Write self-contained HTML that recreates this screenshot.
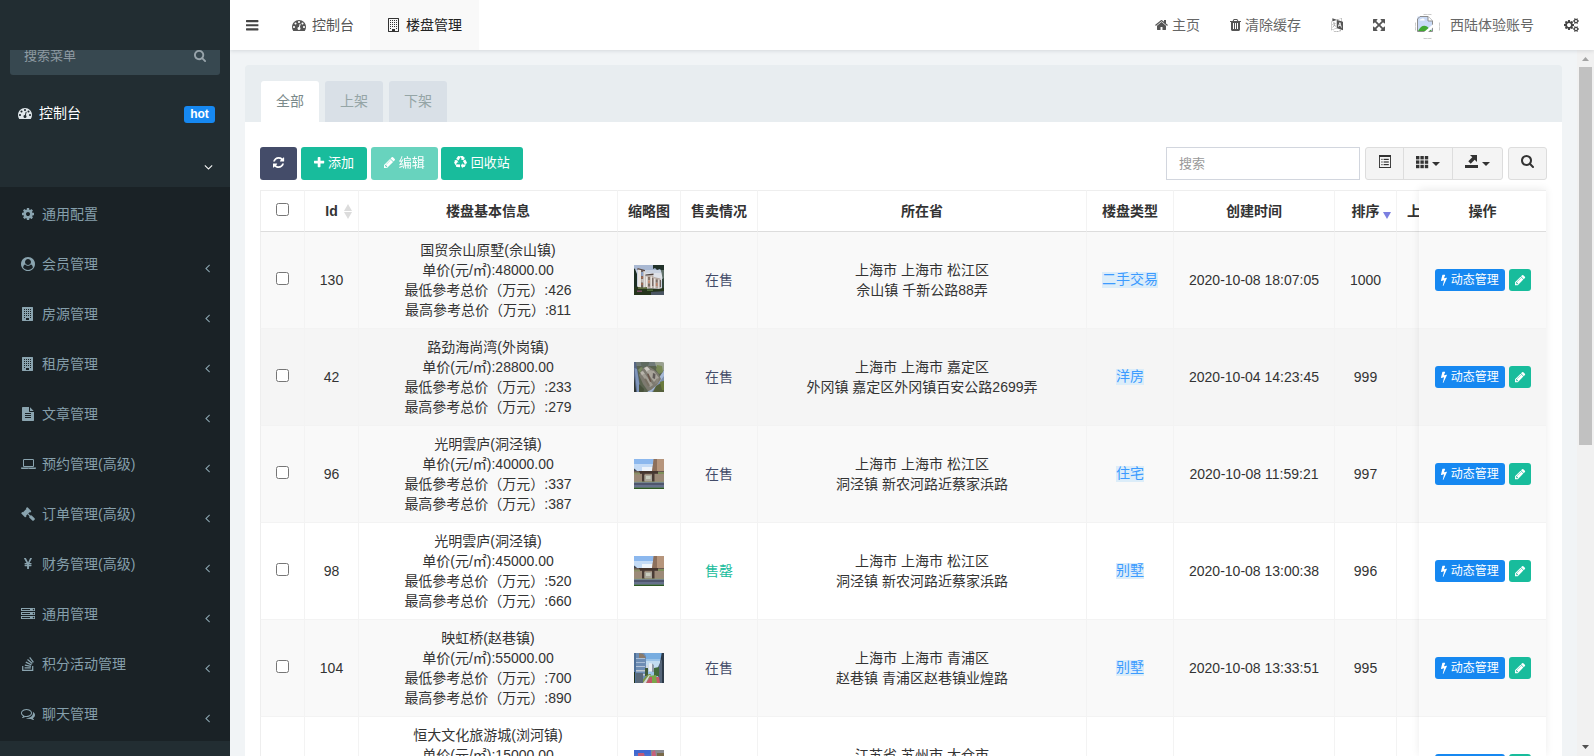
<!DOCTYPE html>
<html lang="zh-CN"><head><meta charset="utf-8"><title>楼盘管理</title><style>
*{box-sizing:border-box}
html,body{margin:0;padding:0}
body{width:1594px;height:756px;overflow:hidden;position:relative;background:#f1f4f6;font-family:"Liberation Sans","Noto Sans CJK SC",sans-serif;font-size:14px;line-height:20px;color:#333}
svg.fa{display:inline-block;vertical-align:-2px;overflow:visible}
.abs{position:absolute}
/* sidebar */
#side{position:absolute;left:0;top:0;width:230px;height:756px;background:#222d32;overflow:hidden;z-index:6}
#sform{position:absolute;left:10px;top:40px;width:210px;height:35px;background:#374850;border-radius:3px}
#sform span.ph{position:absolute;left:14px;top:6px;font-size:13px;line-height:20px;color:#8e9aa2}
#sidetop{position:absolute;left:0;top:0;width:230px;height:50px;background:#222d32}
.m1{position:absolute;left:0;width:230px;height:44px;color:#fff}
.sub{position:absolute;left:0;top:187px;width:230px;height:554px;background:#1a2226}
.sub .it{position:absolute;left:0;width:230px;height:50px;color:#859fab}
.sub .it .ic{position:absolute;left:19px;top:15px;width:18px;height:20px;text-align:center}
.sub .it .tx{position:absolute;left:42px;top:15px;line-height:20px;white-space:nowrap}
.sub .it .ar{position:absolute;left:205px;top:19px;line-height:20px}
/* header */
#hdr{position:absolute;left:230px;top:0;width:1364px;height:50px;background:#fff;box-shadow:0 1px 4px rgba(0,21,41,.12);z-index:5}
#hdr .t{position:absolute;top:0;height:50px;line-height:50px;white-space:nowrap;color:#666}
/* content */
#panel{position:absolute;left:245px;top:65px;width:1317px;height:800px;background:#fff;border-radius:3px}
#phead{position:absolute;left:0;top:0;width:1317px;height:57px;background:#e8edf0;border-radius:3px 3px 0 0}
.ptab{position:absolute;top:16px;height:41px;width:58px;text-align:center;line-height:40px;border-radius:3px 3px 0 0;background:#d9e0e7;color:#95a5a6}
.ptab.on{background:#fff;color:#7b8a8b}
.btn{position:absolute;top:147px;height:33px;border-radius:3px;color:#fff;font-size:13px;line-height:29px;text-align:center;white-space:nowrap;border:1px solid transparent}
.btn svg.fa{vertical-align:-2px}
table{border-collapse:separate;border-spacing:0}
#tw{position:absolute;left:260px;top:190px;width:1286px;height:566px;overflow:hidden}
#tbl{table-layout:fixed;width:1339px}
#tbl th,#tbl td{border-left:1px solid #f3f3f3;border-top:1px solid #f3f3f3;text-align:center;vertical-align:middle;padding:8px;overflow:hidden;white-space:nowrap}
#tbl th{height:42px;padding:0 8px 0;border-bottom:1px solid #ddd;font-weight:bold;color:#333;background:#fff;position:relative}
#tbl td{height:97px;line-height:20px;color:#333}
#tbl tbody tr:first-child td{border-top:0;height:96px}
#tbl th:first-child,#tbl td:first-child{border-left-color:#eee}
#tbl th{border-top-color:#eee}
#tbl tr.s td{background:#f9f9f9}
#tbl tr.h td{background:#f5f5f5}
.cb{display:inline-block;width:13px;height:13px;border:1px solid #767676;border-radius:2.5px;background:#fff;vertical-align:middle;position:relative;top:-3px;left:0px}
#tbl th .cb{top:-3px}
.thumb{display:inline-block;width:30px;height:30px;vertical-align:middle;overflow:hidden}
.lab{display:inline-block;height:16px;line-height:15px;background:#dcedf9;color:#3c9bff;vertical-align:middle;position:relative;top:-1px}
#fix{position:absolute;left:1419px;top:190px;width:127px;height:566px;box-shadow:0 -1px 8px rgba(0,0,0,.08);background:#fff;overflow:hidden}
#fix .h{height:42px;border-top:1px solid #eee;border-bottom:1px solid #ddd;line-height:41px;text-align:center;font-weight:bold;background:#fff}
#fix .r{height:97px;position:relative;border-top:1px solid #f3f3f3;background:#fff}
#fix .r.s{background:#f9f9f9}
#fix .r.hv{background:#f5f5f5}
.xs{position:absolute;top:37px;height:22px;border-radius:3px;color:#fff;font-size:12px;line-height:20px;text-align:center;white-space:nowrap;border:1px solid transparent}
</style></head><body>
<div id="side">
<div id="sform"><span class="ph">搜索菜单</span><span class="abs" style="left:184px;top:9px;color:#999;line-height:0"><svg class="fa" width="12.071" height="13.000" viewBox="0 -1536 1664 1792" style=""><path fill="#98a4ab" transform="scale(1,-1)" d="M1152 704q0 185 -131.5 316.5t-316.5 131.5t-316.5 -131.5t-131.5 -316.5t131.5 -316.5t316.5 -131.5t316.5 131.5t131.5 316.5zM1664 -128q0 -52 -38 -90t-90 -38q-54 0 -90 38l-343 342q-179 -124 -399 -124q-143 0 -273.5 55.5t-225 150t-150 225t-55.5 273.5
t55.5 273.5t150 225t225 150t273.5 55.5t273.5 -55.5t225 -150t150 -225t55.5 -273.5q0 -220 -124 -399l343 -343q37 -37 37 -90z"/></svg></span></div>
<div id="sidetop"></div>
<div class="abs" style="left:18px;top:103px;line-height:20px;color:#fff;white-space:nowrap"><svg class="fa" width="14.000" height="14.000" viewBox="0 -1536 1792 1792" style=""><path fill="#dfe6ea" transform="scale(1,-1)" d="M384 384q0 53 -37.5 90.5t-90.5 37.5t-90.5 -37.5t-37.5 -90.5t37.5 -90.5t90.5 -37.5t90.5 37.5t37.5 90.5zM576 832q0 53 -37.5 90.5t-90.5 37.5t-90.5 -37.5t-37.5 -90.5t37.5 -90.5t90.5 -37.5t90.5 37.5t37.5 90.5zM1004 351l101 382q6 26 -7.5 48.5t-38.5 29.5
t-48 -6.5t-30 -39.5l-101 -382q-60 -5 -107 -43.5t-63 -98.5q-20 -77 20 -146t117 -89t146 20t89 117q16 60 -6 117t-72 91zM1664 384q0 53 -37.5 90.5t-90.5 37.5t-90.5 -37.5t-37.5 -90.5t37.5 -90.5t90.5 -37.5t90.5 37.5t37.5 90.5zM1024 1024q0 53 -37.5 90.5
t-90.5 37.5t-90.5 -37.5t-37.5 -90.5t37.5 -90.5t90.5 -37.5t90.5 37.5t37.5 90.5zM1472 832q0 53 -37.5 90.5t-90.5 37.5t-90.5 -37.5t-37.5 -90.5t37.5 -90.5t90.5 -37.5t90.5 37.5t37.5 90.5zM1792 384q0 -261 -141 -483q-19 -29 -54 -29h-1402q-35 0 -54 29
q-141 221 -141 483q0 182 71 348t191 286t286 191t348 71t348 -71t286 -191t191 -286t71 -348z"/></svg><span style="margin-left:7px">控制台</span></div>
<div class="abs" style="left:184px;top:106px;width:31px;height:17px;border-radius:3px;background:#1688f1;color:#fff;font-size:12px;font-weight:bold;line-height:17px;text-align:center">hot</div>
<div class="abs" style="left:204px;top:157px;line-height:20px"><svg class="fa" width="9.000" height="14.000" viewBox="0 -1536 1152 1792" style=""><path fill="#fff" transform="scale(1,-1)" d="M1075 800q0 -13 -10 -23l-466 -466q-10 -10 -23 -10t-23 10l-466 466q-10 10 -10 23t10 23l50 50q10 10 23 10t23 -10l393 -393l393 393q10 10 23 10t23 -10l50 -50q10 -10 10 -23z"/></svg></div>
<div class="sub">
<div class="it" style="top:2px"><span class="ic"><svg class="fa" width="12.000" height="14.000" viewBox="0 -1536 1536 1792" style=""><path fill="#8aa4af" transform="scale(1,-1)" d="M1024 640q0 106 -75 181t-181 75t-181 -75t-75 -181t75 -181t181 -75t181 75t75 181zM1536 749v-222q0 -12 -8 -23t-20 -13l-185 -28q-19 -54 -39 -91q35 -50 107 -138q10 -12 10 -25t-9 -23q-27 -37 -99 -108t-94 -71q-12 0 -26 9l-138 108q-44 -23 -91 -38
q-16 -136 -29 -186q-7 -28 -36 -28h-222q-14 0 -24.5 8.5t-11.5 21.5l-28 184q-49 16 -90 37l-141 -107q-10 -9 -25 -9q-14 0 -25 11q-126 114 -165 168q-7 10 -7 23q0 12 8 23q15 21 51 66.5t54 70.5q-27 50 -41 99l-183 27q-13 2 -21 12.5t-8 23.5v222q0 12 8 23t19 13
l186 28q14 46 39 92q-40 57 -107 138q-10 12 -10 24q0 10 9 23q26 36 98.5 107.5t94.5 71.5q13 0 26 -10l138 -107q44 23 91 38q16 136 29 186q7 28 36 28h222q14 0 24.5 -8.5t11.5 -21.5l28 -184q49 -16 90 -37l142 107q9 9 24 9q13 0 25 -10q129 -119 165 -170q7 -8 7 -22
q0 -12 -8 -23q-15 -21 -51 -66.5t-54 -70.5q26 -50 41 -98l183 -28q13 -2 21 -12.5t8 -23.5z"/></svg></span><span class="tx">通用配置</span></div>
<div class="it" style="top:52px"><span class="ic"><svg class="fa" width="14.000" height="14.000" viewBox="0 -1536 1792 1792" style=""><path fill="#8aa4af" transform="scale(1,-1)" d="M1523 197q-22 155 -87.5 257.5t-184.5 118.5q-67 -74 -159.5 -115.5t-195.5 -41.5t-195.5 41.5t-159.5 115.5q-119 -16 -184.5 -118.5t-87.5 -257.5q106 -150 271 -237.5t356 -87.5t356 87.5t271 237.5zM1280 896q0 159 -112.5 271.5t-271.5 112.5t-271.5 -112.5
t-112.5 -271.5t112.5 -271.5t271.5 -112.5t271.5 112.5t112.5 271.5zM1792 640q0 -182 -71 -347.5t-190.5 -286t-285.5 -191.5t-349 -71q-182 0 -348 71t-286 191t-191 286t-71 348t71 348t191 286t286 191t348 71t348 -71t286 -191t191 -286t71 -348z"/></svg></span><span class="tx">会员管理</span><span class="ar"><svg class="fa" width="5.000" height="14.000" viewBox="0 -1536 640 1792" style=""><path fill="#8aa4af" transform="scale(1,-1)" d="M627 992q0 -13 -10 -23l-393 -393l393 -393q10 -10 10 -23t-10 -23l-50 -50q-10 -10 -23 -10t-23 10l-466 466q-10 10 -10 23t10 23l466 466q10 10 23 10t23 -10l50 -50q10 -10 10 -23z"/></svg></span></div>
<div class="it" style="top:102px"><span class="ic"><svg class="fa" width="12.000" height="14.000" viewBox="0 -1536 1536 1792" style=""><path fill="#8aa4af" transform="scale(1,-1)" d="M1344 1536q26 0 45 -19t19 -45v-1664q0 -26 -19 -45t-45 -19h-1280q-26 0 -45 19t-19 45v1664q0 26 19 45t45 19h1280zM512 1248v-64q0 -14 9 -23t23 -9h64q14 0 23 9t9 23v64q0 14 -9 23t-23 9h-64q-14 0 -23 -9t-9 -23zM512 992v-64q0 -14 9 -23t23 -9h64q14 0 23 9
t9 23v64q0 14 -9 23t-23 9h-64q-14 0 -23 -9t-9 -23zM512 736v-64q0 -14 9 -23t23 -9h64q14 0 23 9t9 23v64q0 14 -9 23t-23 9h-64q-14 0 -23 -9t-9 -23zM512 480v-64q0 -14 9 -23t23 -9h64q14 0 23 9t9 23v64q0 14 -9 23t-23 9h-64q-14 0 -23 -9t-9 -23zM384 160v64
q0 14 -9 23t-23 9h-64q-14 0 -23 -9t-9 -23v-64q0 -14 9 -23t23 -9h64q14 0 23 9t9 23zM384 416v64q0 14 -9 23t-23 9h-64q-14 0 -23 -9t-9 -23v-64q0 -14 9 -23t23 -9h64q14 0 23 9t9 23zM384 672v64q0 14 -9 23t-23 9h-64q-14 0 -23 -9t-9 -23v-64q0 -14 9 -23t23 -9h64
q14 0 23 9t9 23zM384 928v64q0 14 -9 23t-23 9h-64q-14 0 -23 -9t-9 -23v-64q0 -14 9 -23t23 -9h64q14 0 23 9t9 23zM384 1184v64q0 14 -9 23t-23 9h-64q-14 0 -23 -9t-9 -23v-64q0 -14 9 -23t23 -9h64q14 0 23 9t9 23zM896 -96v192q0 14 -9 23t-23 9h-320q-14 0 -23 -9
t-9 -23v-192q0 -14 9 -23t23 -9h320q14 0 23 9t9 23zM896 416v64q0 14 -9 23t-23 9h-64q-14 0 -23 -9t-9 -23v-64q0 -14 9 -23t23 -9h64q14 0 23 9t9 23zM896 672v64q0 14 -9 23t-23 9h-64q-14 0 -23 -9t-9 -23v-64q0 -14 9 -23t23 -9h64q14 0 23 9t9 23zM896 928v64
q0 14 -9 23t-23 9h-64q-14 0 -23 -9t-9 -23v-64q0 -14 9 -23t23 -9h64q14 0 23 9t9 23zM896 1184v64q0 14 -9 23t-23 9h-64q-14 0 -23 -9t-9 -23v-64q0 -14 9 -23t23 -9h64q14 0 23 9t9 23zM1152 160v64q0 14 -9 23t-23 9h-64q-14 0 -23 -9t-9 -23v-64q0 -14 9 -23t23 -9h64
q14 0 23 9t9 23zM1152 416v64q0 14 -9 23t-23 9h-64q-14 0 -23 -9t-9 -23v-64q0 -14 9 -23t23 -9h64q14 0 23 9t9 23zM1152 672v64q0 14 -9 23t-23 9h-64q-14 0 -23 -9t-9 -23v-64q0 -14 9 -23t23 -9h64q14 0 23 9t9 23zM1152 928v64q0 14 -9 23t-23 9h-64q-14 0 -23 -9
t-9 -23v-64q0 -14 9 -23t23 -9h64q14 0 23 9t9 23zM1152 1184v64q0 14 -9 23t-23 9h-64q-14 0 -23 -9t-9 -23v-64q0 -14 9 -23t23 -9h64q14 0 23 9t9 23z"/></svg></span><span class="tx">房源管理</span><span class="ar"><svg class="fa" width="5.000" height="14.000" viewBox="0 -1536 640 1792" style=""><path fill="#8aa4af" transform="scale(1,-1)" d="M627 992q0 -13 -10 -23l-393 -393l393 -393q10 -10 10 -23t-10 -23l-50 -50q-10 -10 -23 -10t-23 10l-466 466q-10 10 -10 23t10 23l466 466q10 10 23 10t23 -10l50 -50q10 -10 10 -23z"/></svg></span></div>
<div class="it" style="top:152px"><span class="ic"><svg class="fa" width="12.000" height="14.000" viewBox="0 -1536 1536 1792" style=""><path fill="#8aa4af" transform="scale(1,-1)" d="M1344 1536q26 0 45 -19t19 -45v-1664q0 -26 -19 -45t-45 -19h-1280q-26 0 -45 19t-19 45v1664q0 26 19 45t45 19h1280zM512 1248v-64q0 -14 9 -23t23 -9h64q14 0 23 9t9 23v64q0 14 -9 23t-23 9h-64q-14 0 -23 -9t-9 -23zM512 992v-64q0 -14 9 -23t23 -9h64q14 0 23 9
t9 23v64q0 14 -9 23t-23 9h-64q-14 0 -23 -9t-9 -23zM512 736v-64q0 -14 9 -23t23 -9h64q14 0 23 9t9 23v64q0 14 -9 23t-23 9h-64q-14 0 -23 -9t-9 -23zM512 480v-64q0 -14 9 -23t23 -9h64q14 0 23 9t9 23v64q0 14 -9 23t-23 9h-64q-14 0 -23 -9t-9 -23zM384 160v64
q0 14 -9 23t-23 9h-64q-14 0 -23 -9t-9 -23v-64q0 -14 9 -23t23 -9h64q14 0 23 9t9 23zM384 416v64q0 14 -9 23t-23 9h-64q-14 0 -23 -9t-9 -23v-64q0 -14 9 -23t23 -9h64q14 0 23 9t9 23zM384 672v64q0 14 -9 23t-23 9h-64q-14 0 -23 -9t-9 -23v-64q0 -14 9 -23t23 -9h64
q14 0 23 9t9 23zM384 928v64q0 14 -9 23t-23 9h-64q-14 0 -23 -9t-9 -23v-64q0 -14 9 -23t23 -9h64q14 0 23 9t9 23zM384 1184v64q0 14 -9 23t-23 9h-64q-14 0 -23 -9t-9 -23v-64q0 -14 9 -23t23 -9h64q14 0 23 9t9 23zM896 -96v192q0 14 -9 23t-23 9h-320q-14 0 -23 -9
t-9 -23v-192q0 -14 9 -23t23 -9h320q14 0 23 9t9 23zM896 416v64q0 14 -9 23t-23 9h-64q-14 0 -23 -9t-9 -23v-64q0 -14 9 -23t23 -9h64q14 0 23 9t9 23zM896 672v64q0 14 -9 23t-23 9h-64q-14 0 -23 -9t-9 -23v-64q0 -14 9 -23t23 -9h64q14 0 23 9t9 23zM896 928v64
q0 14 -9 23t-23 9h-64q-14 0 -23 -9t-9 -23v-64q0 -14 9 -23t23 -9h64q14 0 23 9t9 23zM896 1184v64q0 14 -9 23t-23 9h-64q-14 0 -23 -9t-9 -23v-64q0 -14 9 -23t23 -9h64q14 0 23 9t9 23zM1152 160v64q0 14 -9 23t-23 9h-64q-14 0 -23 -9t-9 -23v-64q0 -14 9 -23t23 -9h64
q14 0 23 9t9 23zM1152 416v64q0 14 -9 23t-23 9h-64q-14 0 -23 -9t-9 -23v-64q0 -14 9 -23t23 -9h64q14 0 23 9t9 23zM1152 672v64q0 14 -9 23t-23 9h-64q-14 0 -23 -9t-9 -23v-64q0 -14 9 -23t23 -9h64q14 0 23 9t9 23zM1152 928v64q0 14 -9 23t-23 9h-64q-14 0 -23 -9
t-9 -23v-64q0 -14 9 -23t23 -9h64q14 0 23 9t9 23zM1152 1184v64q0 14 -9 23t-23 9h-64q-14 0 -23 -9t-9 -23v-64q0 -14 9 -23t23 -9h64q14 0 23 9t9 23z"/></svg></span><span class="tx">租房管理</span><span class="ar"><svg class="fa" width="5.000" height="14.000" viewBox="0 -1536 640 1792" style=""><path fill="#8aa4af" transform="scale(1,-1)" d="M627 992q0 -13 -10 -23l-393 -393l393 -393q10 -10 10 -23t-10 -23l-50 -50q-10 -10 -23 -10t-23 10l-466 466q-10 10 -10 23t10 23l466 466q10 10 23 10t23 -10l50 -50q10 -10 10 -23z"/></svg></span></div>
<div class="it" style="top:202px"><span class="ic"><svg class="fa" width="12.000" height="14.000" viewBox="0 -1536 1536 1792" style=""><path fill="#8aa4af" transform="scale(1,-1)" d="M1468 1060q14 -14 28 -36h-472v472q22 -14 36 -28zM992 896h544v-1056q0 -40 -28 -68t-68 -28h-1344q-40 0 -68 28t-28 68v1600q0 40 28 68t68 28h800v-544q0 -40 28 -68t68 -28zM1152 160v64q0 14 -9 23t-23 9h-704q-14 0 -23 -9t-9 -23v-64q0 -14 9 -23t23 -9h704
q14 0 23 9t9 23zM1152 416v64q0 14 -9 23t-23 9h-704q-14 0 -23 -9t-9 -23v-64q0 -14 9 -23t23 -9h704q14 0 23 9t9 23zM1152 672v64q0 14 -9 23t-23 9h-704q-14 0 -23 -9t-9 -23v-64q0 -14 9 -23t23 -9h704q14 0 23 9t9 23z"/></svg></span><span class="tx">文章管理</span><span class="ar"><svg class="fa" width="5.000" height="14.000" viewBox="0 -1536 640 1792" style=""><path fill="#8aa4af" transform="scale(1,-1)" d="M627 992q0 -13 -10 -23l-393 -393l393 -393q10 -10 10 -23t-10 -23l-50 -50q-10 -10 -23 -10t-23 10l-466 466q-10 10 -10 23t10 23l466 466q10 10 23 10t23 -10l50 -50q10 -10 10 -23z"/></svg></span></div>
<div class="it" style="top:252px"><span class="ic"><svg class="fa" width="15.000" height="14.000" viewBox="0 -1536 1920 1792" style=""><path fill="#8aa4af" transform="scale(1,-1)" d="M416 256q-66 0 -113 47t-47 113v704q0 66 47 113t113 47h1088q66 0 113 -47t47 -113v-704q0 -66 -47 -113t-113 -47h-1088zM384 1120v-704q0 -13 9.5 -22.5t22.5 -9.5h1088q13 0 22.5 9.5t9.5 22.5v704q0 13 -9.5 22.5t-22.5 9.5h-1088q-13 0 -22.5 -9.5t-9.5 -22.5z
M1760 192h160v-96q0 -40 -47 -68t-113 -28h-1600q-66 0 -113 28t-47 68v96h160h1600zM1040 96q16 0 16 16t-16 16h-160q-16 0 -16 -16t16 -16h160z"/></svg></span><span class="tx">预约管理(高级)</span><span class="ar"><svg class="fa" width="5.000" height="14.000" viewBox="0 -1536 640 1792" style=""><path fill="#8aa4af" transform="scale(1,-1)" d="M627 992q0 -13 -10 -23l-393 -393l393 -393q10 -10 10 -23t-10 -23l-50 -50q-10 -10 -23 -10t-23 10l-466 466q-10 10 -10 23t10 23l466 466q10 10 23 10t23 -10l50 -50q10 -10 10 -23z"/></svg></span></div>
<div class="it" style="top:302px"><span class="ic"><svg class="fa" width="14.000" height="14.000" viewBox="0 -1536 1792 1792" style=""><path fill="#8aa4af" transform="scale(1,-1)" d="M1771 0q0 -53 -37 -90l-107 -108q-39 -37 -91 -37q-53 0 -90 37l-363 364q-38 36 -38 90q0 53 43 96l-256 256l-126 -126q-14 -14 -34 -14t-34 14q2 -2 12.5 -12t12.5 -13t10 -11.5t10 -13.5t6 -13.5t5.5 -16.5t1.5 -18q0 -38 -28 -68q-3 -3 -16.5 -18t-19 -20.5
t-18.5 -16.5t-22 -15.5t-22 -9t-26 -4.5q-40 0 -68 28l-408 408q-28 28 -28 68q0 13 4.5 26t9 22t15.5 22t16.5 18.5t20.5 19t18 16.5q30 28 68 28q10 0 18 -1.5t16.5 -5.5t13.5 -6t13.5 -10t11.5 -10t13 -12.5t12 -12.5q-14 14 -14 34t14 34l348 348q14 14 34 14t34 -14
q-2 2 -12.5 12t-12.5 13t-10 11.5t-10 13.5t-6 13.5t-5.5 16.5t-1.5 18q0 38 28 68q3 3 16.5 18t19 20.5t18.5 16.5t22 15.5t22 9t26 4.5q40 0 68 -28l408 -408q28 -28 28 -68q0 -13 -4.5 -26t-9 -22t-15.5 -22t-16.5 -18.5t-20.5 -19t-18 -16.5q-30 -28 -68 -28
q-10 0 -18 1.5t-16.5 5.5t-13.5 6t-13.5 10t-11.5 10t-13 12.5t-12 12.5q14 -14 14 -34t-14 -34l-126 -126l256 -256q43 43 96 43q52 0 91 -37l363 -363q37 -39 37 -91z"/></svg></span><span class="tx">订单管理(高级)</span><span class="ar"><svg class="fa" width="5.000" height="14.000" viewBox="0 -1536 640 1792" style=""><path fill="#8aa4af" transform="scale(1,-1)" d="M627 992q0 -13 -10 -23l-393 -393l393 -393q10 -10 10 -23t-10 -23l-50 -50q-10 -10 -23 -10t-23 10l-466 466q-10 10 -10 23t10 23l466 466q10 10 23 10t23 -10l50 -50q10 -10 10 -23z"/></svg></span></div>
<div class="it" style="top:352px"><span class="ic"><svg class="fa" width="8.023" height="14.000" viewBox="0 -1536 1027 1792" style=""><path fill="#8aa4af" transform="scale(1,-1)" d="M603 0h-172q-13 0 -22.5 9t-9.5 23v330h-288q-13 0 -22.5 9t-9.5 23v103q0 13 9.5 22.5t22.5 9.5h288v85h-288q-13 0 -22.5 9t-9.5 23v104q0 13 9.5 22.5t22.5 9.5h214l-321 578q-8 16 0 32q10 16 28 16h194q19 0 29 -18l215 -425q19 -38 56 -125q10 24 30.5 68t27.5 61
l191 420q8 19 29 19h191q17 0 27 -16q9 -14 1 -31l-313 -579h215q13 0 22.5 -9.5t9.5 -22.5v-104q0 -14 -9.5 -23t-22.5 -9h-290v-85h290q13 0 22.5 -9.5t9.5 -22.5v-103q0 -14 -9.5 -23t-22.5 -9h-290v-330q0 -13 -9.5 -22.5t-22.5 -9.5z"/></svg></span><span class="tx">财务管理(高级)</span><span class="ar"><svg class="fa" width="5.000" height="14.000" viewBox="0 -1536 640 1792" style=""><path fill="#8aa4af" transform="scale(1,-1)" d="M627 992q0 -13 -10 -23l-393 -393l393 -393q10 -10 10 -23t-10 -23l-50 -50q-10 -10 -23 -10t-23 10l-466 466q-10 10 -10 23t10 23l466 466q10 10 23 10t23 -10l50 -50q10 -10 10 -23z"/></svg></span></div>
<div class="it" style="top:402px"><span class="ic"><svg class="fa" width="14.000" height="14.000" viewBox="0 -1536 1792 1792" style=""><path fill="#8aa4af" transform="scale(1,-1)" d="M128 128h1024v128h-1024v-128zM128 640h1024v128h-1024v-128zM1696 192q0 40 -28 68t-68 28t-68 -28t-28 -68t28 -68t68 -28t68 28t28 68zM128 1152h1024v128h-1024v-128zM1696 704q0 40 -28 68t-68 28t-68 -28t-28 -68t28 -68t68 -28t68 28t28 68zM1696 1216
q0 40 -28 68t-68 28t-68 -28t-28 -68t28 -68t68 -28t68 28t28 68zM1792 384v-384h-1792v384h1792zM1792 896v-384h-1792v384h1792zM1792 1408v-384h-1792v384h1792z"/></svg></span><span class="tx">通用管理</span><span class="ar"><svg class="fa" width="5.000" height="14.000" viewBox="0 -1536 640 1792" style=""><path fill="#8aa4af" transform="scale(1,-1)" d="M627 992q0 -13 -10 -23l-393 -393l393 -393q10 -10 10 -23t-10 -23l-50 -50q-10 -10 -23 -10t-23 10l-466 466q-10 10 -10 23t10 23l466 466q10 10 23 10t23 -10l50 -50q10 -10 10 -23z"/></svg></span></div>
<div class="it" style="top:452px"><span class="ic"><svg class="fa" width="12.000" height="14.000" viewBox="0 -1536 1536 1792" style=""><path fill="#8aa4af" transform="scale(1,-1)" d="M1289 -96h-1118v480h-160v-640h1438v640h-160v-480zM347 428l33 157l783 -165l-33 -156zM450 802l67 146l725 -339l-67 -145zM651 1158l102 123l614 -513l-102 -123zM1048 1536l477 -641l-128 -96l-477 641zM330 65v159h800v-159h-800z"/></svg></span><span class="tx">积分活动管理</span><span class="ar"><svg class="fa" width="5.000" height="14.000" viewBox="0 -1536 640 1792" style=""><path fill="#8aa4af" transform="scale(1,-1)" d="M627 992q0 -13 -10 -23l-393 -393l393 -393q10 -10 10 -23t-10 -23l-50 -50q-10 -10 -23 -10t-23 10l-466 466q-10 10 -10 23t10 23l466 466q10 10 23 10t23 -10l50 -50q10 -10 10 -23z"/></svg></span></div>
<div class="it" style="top:502px"><span class="ic"><svg class="fa" width="14.000" height="14.000" viewBox="0 -1536 1792 1792" style=""><path fill="#8aa4af" transform="scale(1,-1)" d="M704 1152q-153 0 -286 -52t-211.5 -141t-78.5 -191q0 -82 53 -158t149 -132l97 -56l-35 -84q34 20 62 39l44 31l53 -10q78 -14 153 -14q153 0 286 52t211.5 141t78.5 191t-78.5 191t-211.5 141t-286 52zM704 1280q191 0 353.5 -68.5t256.5 -186.5t94 -257t-94 -257
t-256.5 -186.5t-353.5 -68.5q-86 0 -176 16q-124 -88 -278 -128q-36 -9 -86 -16h-3q-11 0 -20.5 8t-11.5 21q-1 3 -1 6.5t0.5 6.5t2 6l2.5 5t3.5 5.5t4 5t4.5 5t4 4.5q5 6 23 25t26 29.5t22.5 29t25 38.5t20.5 44q-124 72 -195 177t-71 224q0 139 94 257t256.5 186.5
t353.5 68.5zM1526 111q10 -24 20.5 -44t25 -38.5t22.5 -29t26 -29.5t23 -25q1 -1 4 -4.5t4.5 -5t4 -5t3.5 -5.5l2.5 -5t2 -6t0.5 -6.5t-1 -6.5q-3 -14 -13 -22t-22 -7q-50 7 -86 16q-154 40 -278 128q-90 -16 -176 -16q-271 0 -472 132q58 -4 88 -4q161 0 309 45t264 129
q125 92 192 212t67 254q0 77 -23 152q129 -71 204 -178t75 -230q0 -120 -71 -224.5t-195 -176.5z"/></svg></span><span class="tx">聊天管理</span><span class="ar"><svg class="fa" width="5.000" height="14.000" viewBox="0 -1536 640 1792" style=""><path fill="#8aa4af" transform="scale(1,-1)" d="M627 992q0 -13 -10 -23l-393 -393l393 -393q10 -10 10 -23t-10 -23l-50 -50q-10 -10 -23 -10t-23 10l-466 466q-10 10 -10 23t10 23l466 466q10 10 23 10t23 -10l50 -50q10 -10 10 -23z"/></svg></span></div>
</div>
</div>
<div id="panel"><div id="phead">
<div class="ptab on" style="left:16px">全部</div><div class="ptab" style="left:80px">上架</div><div class="ptab" style="left:144px">下架</div>
</div></div>
<div class="btn" style="left:260px;width:37px;background:#444c69"><svg class="fa" width="11.143" height="13.000" viewBox="0 -1536 1536 1792" style=""><path fill="#fff" transform="scale(1,-1)" d="M1511 480q0 -5 -1 -7q-64 -268 -268 -434.5t-478 -166.5q-146 0 -282.5 55t-243.5 157l-129 -129q-19 -19 -45 -19t-45 19t-19 45v448q0 26 19 45t45 19h448q26 0 45 -19t19 -45t-19 -45l-137 -137q71 -66 161 -102t187 -36q134 0 250 65t186 179q11 17 53 117
q8 23 30 23h192q13 0 22.5 -9.5t9.5 -22.5zM1536 1280v-448q0 -26 -19 -45t-45 -19h-448q-26 0 -45 19t-19 45t19 45l138 138q-148 137 -349 137q-134 0 -250 -65t-186 -179q-11 -17 -53 -117q-8 -23 -30 -23h-199q-13 0 -22.5 9.5t-9.5 22.5v7q65 268 270 434.5t480 166.5
q146 0 284 -55.5t245 -156.5l130 129q19 19 45 19t45 -19t19 -45z"/></svg></div>
<div class="btn" style="left:301px;width:66px;background:#18bc9c"><svg class="fa" width="10.214" height="13.000" viewBox="0 -1536 1408 1792" style=""><path fill="#fff" transform="scale(1,-1)" d="M1408 800v-192q0 -40 -28 -68t-68 -28h-416v-416q0 -40 -28 -68t-68 -28h-192q-40 0 -68 28t-28 68v416h-416q-40 0 -68 28t-28 68v192q0 40 28 68t68 28h416v416q0 40 28 68t68 28h192q40 0 68 -28t28 -68v-416h416q40 0 68 -28t28 -68z"/></svg> 添加</div>
<div class="btn" style="left:371px;width:67px;background:#18bc9c;opacity:.65"><svg class="fa" width="11.143" height="13.000" viewBox="0 -1536 1536 1792" style=""><path fill="#fff" transform="scale(1,-1)" d="M363 0l91 91l-235 235l-91 -91v-107h128v-128h107zM886 928q0 22 -22 22q-10 0 -17 -7l-542 -542q-7 -7 -7 -17q0 -22 22 -22q10 0 17 7l542 542q7 7 7 17zM832 1120l416 -416l-832 -832h-416v416zM1515 1024q0 -53 -37 -90l-166 -166l-416 416l166 165q36 38 90 38
q53 0 91 -38l235 -234q37 -39 37 -91z"/></svg> 编辑</div>
<div class="btn" style="left:441px;width:82px;background:#18bc9c"><svg class="fa" width="13.000" height="13.000" viewBox="0 -1536 1792 1792" style=""><path fill="#fff" transform="scale(1,-1)" d="M836 367l-15 -368l-2 -22l-420 29q-36 3 -67 31.5t-47 65.5q-11 27 -14.5 55t4 65t12 55t21.5 64t19 53q78 -12 509 -28zM449 953l180 -379l-147 92q-63 -72 -111.5 -144.5t-72.5 -125t-39.5 -94.5t-18.5 -63l-4 -21l-190 357q-17 26 -18 56t6 47l8 18q35 63 114 188
l-140 86zM1680 436l-188 -359q-12 -29 -36.5 -46.5t-43.5 -20.5l-18 -4q-71 -7 -219 -12l8 -164l-230 367l211 362l7 -173q170 -16 283 -5t170 33zM895 1360q-47 -63 -265 -435l-317 187l-19 12l225 356q20 31 60 45t80 10q24 -2 48.5 -12t42 -21t41.5 -33t36 -34.5
t36 -39.5t32 -35zM1550 1053l212 -363q18 -37 12.5 -76t-27.5 -74q-13 -20 -33 -37t-38 -28t-48.5 -22t-47 -16t-51.5 -14t-46 -12q-34 72 -265 436l313 195zM1407 1279l142 83l-220 -373l-419 20l151 86q-34 89 -75 166t-75.5 123.5t-64.5 80t-47 46.5l-17 13l405 -1
q31 3 58 -10.5t39 -28.5l11 -15q39 -61 112 -190z"/></svg> 回收站</div>
<div class="abs" style="left:1166px;top:147px;width:194px;height:33px;border:1px solid #d2d6de;border-radius:0;background:#fff;font-size:13px;line-height:31px;padding-left:12px;color:#999">搜索</div>
<div class="abs" style="left:1365px;top:147px;width:138px;height:33px;border:1px solid #ddd;border-radius:3px;background:#f4f4f4"></div>
<div class="abs" style="left:1403px;top:148px;width:1px;height:31px;background:#ddd"></div>
<div class="abs" style="left:1452px;top:148px;width:1px;height:31px;background:#ddd"></div>
<div class="abs" style="left:1508px;top:147px;width:39px;height:33px;border:1px solid #ddd;border-radius:3px;background:#f4f4f4"></div>
<svg class="abs" style="left:1379px;top:155px" width="12" height="13" viewBox="0 0 13 13" preserveAspectRatio="none"><rect x=".5" y=".5" width="12" height="12" fill="none" stroke="#333" stroke-width="1"/><rect x="0" y="0" width="13" height="2" fill="#333"/><rect x="2.6" y="3.8" width="1.2" height="1.2" fill="#333"/><rect x="5" y="3.8" width="5.6" height="1.2" fill="#333"/><rect x="2.6" y="6.400" width="1.2" height="1.2" fill="#333"/><rect x="5" y="6.400" width="5.6" height="1.2" fill="#333"/><rect x="2.6" y="9" width="1.2" height="1.2" fill="#333"/><rect x="5" y="9" width="5.6" height="1.2" fill="#333"/></svg>
<svg class="abs" style="left:1416px;top:156px" width="13" height="13" viewBox="0 0 13 13"><rect x="0.0" y="0.0" width="3.4" height="3.4" fill="#333"/><rect x="0.0" y="4.4" width="3.4" height="3.4" fill="#333"/><rect x="0.0" y="8.8" width="3.4" height="3.4" fill="#333"/><rect x="4.4" y="0.0" width="3.4" height="3.4" fill="#333"/><rect x="4.4" y="4.4" width="3.4" height="3.4" fill="#333"/><rect x="4.4" y="8.8" width="3.4" height="3.4" fill="#333"/><rect x="8.8" y="0.0" width="3.4" height="3.4" fill="#333"/><rect x="8.8" y="4.4" width="3.4" height="3.4" fill="#333"/><rect x="8.8" y="8.8" width="3.4" height="3.4" fill="#333"/></svg>
<svg class="abs" style="left:1432px;top:162px" width="8" height="4" viewBox="0 0 8 4"><path d="M0 0h8L4 4z" fill="#333"/></svg>
<svg class="abs" style="left:1465px;top:155px" width="13" height="13" viewBox="0 0 13 13"><rect x="0" y="10" width="13" height="3" fill="#333"/><path d="M5 0h7v7l-2.3-2.3-4 4-2.4-2.4 4-4z" fill="#333"/></svg>
<svg class="abs" style="left:1482px;top:162px" width="8" height="4" viewBox="0 0 8 4"><path d="M0 0h8L4 4z" fill="#333"/></svg>
<div class="abs" style="left:1521px;top:151px;line-height:20px"><svg class="fa" width="13.000" height="14.000" viewBox="0 -1536 1664 1792" style=""><path fill="#333" transform="scale(1,-1)" d="M1152 704q0 185 -131.5 316.5t-316.5 131.5t-316.5 -131.5t-131.5 -316.5t131.5 -316.5t316.5 -131.5t316.5 131.5t131.5 316.5zM1664 -128q0 -52 -38 -90t-90 -38q-54 0 -90 38l-343 342q-179 -124 -399 -124q-143 0 -273.5 55.5t-225 150t-150 225t-55.5 273.5
t55.5 273.5t150 225t225 150t273.5 55.5t273.5 -55.5t225 -150t150 -225t55.5 -273.5q0 -220 -124 -399l343 -343q37 -37 37 -90z"/></svg></div>
<div id="tw"><table id="tbl"><colgroup>
<col style="width:44px">
<col style="width:54px">
<col style="width:259px">
<col style="width:63px">
<col style="width:77px">
<col style="width:329px">
<col style="width:87px">
<col style="width:161px">
<col style="width:62px">
<col style="width:203px">
</colgroup><thead><tr>
<th><span class="cb"></span></th>
<th>Id<svg width="8" height="15" viewBox="0 0 8 15" style="position:absolute;right:6px;top:13px"><path d="M4 0L8 7H0z" fill="#dcdcdc"/><path d="M4 15L8 8H0z" fill="#dcdcdc"/></svg></th>
<th>楼盘基本信息</th>
<th>缩略图</th>
<th>售卖情况</th>
<th>所在省</th>
<th>楼盘类型</th>
<th>创建时间</th>
<th>排序<svg width="8" height="15" viewBox="0 0 8 15" style="position:absolute;right:5.5px;top:13px"><path d="M4 15L8 8H0z" fill="#7b7fe0"/></svg></th>
<th style="text-align:left;padding-left:10px">上架状态</th>
</tr></thead><tbody>
<tr class="s">
<td><span class="cb"></span></td>
<td>130</td>
<td>国贸佘山原墅(佘山镇)<br>单价(元/㎡):48000.00<br>最低參考总价（万元）:426<br>最高參考总价（万元）:811</td>
<td><span class="thumb"><svg width="30" height="30" viewBox="0 0 30 30" style="display:block"><defs><filter id="tbr130" x="-10%" y="-10%" width="120%" height="120%"><feGaussianBlur stdDeviation="0.45"/></filter><clipPath id="tcr130"><rect width="30" height="30"/></clipPath></defs><g clip-path="url(#tcr130)"><g filter="url(#tbr130)"><rect x="-2" y="-2" width="34" height="34" fill="#c9d2e0"/><rect x="-2" y="-2" width="34" height="7" fill="#a9b8d2"/><rect x="12" y="8" width="18" height="8" fill="#dde1e8"/><path d="M19 -2h13v8l-2 -1l-2 2l-2 -3l-3 1l-2 -2l-2 1z" fill="#22322a"/><path d="M27 5l5 0v10l-3 1z" fill="#5f7068"/><path d="M28 14l4 -2v14h-4z" fill="#33443a"/><path d="M-2 2l3 2l2 5l0 14h-5z" fill="#1f2e24"/><path d="M3.500 3l7.500 2v1.500l-7.500 -1.500z" fill="#5b4a44"/><path d="M4 4.500l3 .5v19h-3z" fill="#e9e5e1"/><path d="M7 5l2.500 .8v19h-2.500z" fill="#6f625c"/><rect x="7.2" y="7" width="2.2" height="4" fill="#8ea5cc"/><rect x="7.2" y="11.5" width="2.2" height="2" fill="#a66a50"/><rect x="7.2" y="14" width="2.2" height="3.5" fill="#c9c2bd"/><rect x="7.2" y="18" width="2.2" height="2" fill="#9c6a54"/><path d="M9.500 6l2 .7v17h-2z" fill="#e3deda"/><path d="M11.500 9.500l8 -1l0 1.500l-8 1z" fill="#4f423e"/><path d="M11.500 10.500h8v13h-8z" fill="#b9aca4"/><rect x="12" y="11.5" width="1.5" height="12" fill="#ece8e4"/><rect x="14" y="12" width="2" height="3" fill="#8a7468"/><rect x="14" y="15.5" width="2" height="2.5" fill="#c58e74"/><rect x="14" y="18.5" width="2" height="3" fill="#7a6a62"/><rect x="16.5" y="11.5" width="1.5" height="12" fill="#e6e1dc"/><rect x="18.2" y="13" width="1.3" height="8" fill="#6b5d57"/><path d="M19.500 12l7 1.500v10h-7z" fill="#b3a69e"/><rect x="20" y="13.5" width="1.5" height="10" fill="#e8e3df"/><rect x="21.8" y="14.5" width="1.8" height="3" fill="#7d6e66"/><rect x="21.8" y="18" width="1.8" height="3" fill="#b9826a"/><rect x="24" y="14.5" width="1.5" height="9" fill="#ded8d3"/><rect x="25.8" y="15" width="1.2" height="7" fill="#6a5c56"/><path d="M-2 23l5 -1.500l6 2.500l8 -.5l8 .5l7 -2v12h-34z" fill="#27351f"/><path d="M4 22l5 .5l4 -.5l0 2h-9z" fill="#5b6a3c"/><rect x="3" y="25.5" width="5" height="1.5" fill="#7c4a66"/><rect x="13" y="24.5" width="6" height="1.5" fill="#4f6a3a"/><path d="M17 27l15 -1v6h-15z" fill="#4b5663"/></g></g></svg></span></td>
<td style="color:#444c69">在售</td>
<td>上海市 上海市 松江区<br>佘山镇 千新公路88弄</td>
<td><span class="lab">二手交易</span></td>
<td>2020-10-08 18:07:05</td>
<td>1000</td>
<td></td>
</tr>
<tr class="h">
<td><span class="cb"></span></td>
<td>42</td>
<td>路劲海尚湾(外岗镇)<br>单价(元/㎡):28800.00<br>最低參考总价（万元）:233<br>最高參考总价（万元）:279</td>
<td><span class="thumb"><svg width="30" height="30" viewBox="0 0 30 30" style="display:block"><defs><filter id="tbr42" x="-10%" y="-10%" width="120%" height="120%"><feGaussianBlur stdDeviation="0.60"/></filter><clipPath id="tcr42"><rect width="30" height="30"/></clipPath></defs><g clip-path="url(#tcr42)"><g filter="url(#tbr42)"><rect x="-2" y="-2" width="34" height="34" fill="#5a6350"/><rect x="-2" y="-2" width="34" height="6" fill="#6f7a78"/><path d="M6 -2h10l-2 6l-6 2z" fill="#5f6b5e"/><path d="M20 -2h12v9l-5 3l-5 -6z" fill="#99a08f"/><path d="M26 -2h6v5z" fill="#c5c9c4"/><path d="M-2 -2h3.500l3 16l2.500 18h-9z" fill="#566582"/><path d="M.5 6l2.500 1l3.500 23h-3.500z" fill="#7f95ba"/><path d="M-2 12l2 2l2.500 18h-4.500z" fill="#2f3630"/><path d="M30 8l2 -1v8l-11 12l-5 5h-5l8 -7z" fill="#a6b8d6"/><path d="M30 14l2 -1v4l-12 15h-4z" fill="#7e90ae"/><path d="M9 6l5 -2l5 3l5 4l3 6l-4 6l-6 5l-3 1l-5 -7l-4 -9z" fill="#7d7a70"/><path d="M10 6l3 -1.500l3 3l-3 2.500z" fill="#cfcbc4"/><path d="M6 10l3 -1l2 3l-3 1.500z" fill="#b9b5ac"/><path d="M12 9l4 -1l7 9l-3 3z" fill="#aaa69c"/><path d="M8 13l3 -1l8 11l-3 2z" fill="#a29e94"/><path d="M16 8l4 1l5 7l-2 3z" fill="#a9a59c"/><path d="M13 12l1.500 -.5l3 8l-1.500 .5z" fill="#6a574c"/><path d="M19 11l2.500 1l-.5 5l-2.500 -1z" fill="#5e5a58"/><path d="M10 17l2 -.5l4 7l-2 1z" fill="#777064"/><path d="M22 17l3 -1l-1 5l-3 1z" fill="#8a867c"/><path d="M23 3l5 1l1 6l-4 2l-3 -4z" fill="#7a8a56"/><path d="M22 24l10 -6v14h-14z" fill="#55603a"/><path d="M26 20l6 -2v10l-4 0z" fill="#6b7a3c"/><path d="M5 22l5 5l-1 5h-4z" fill="#46513a"/><path d="M4 8l3 -3l2 1l-3 5z" fill="#7a8a62"/></g></g></svg></span></td>
<td style="color:#444c69">在售</td>
<td>上海市 上海市 嘉定区<br>外冈镇 嘉定区外冈镇百安公路2699弄</td>
<td><span class="lab">洋房</span></td>
<td>2020-10-04 14:23:45</td>
<td>999</td>
<td></td>
</tr>
<tr class="s">
<td><span class="cb"></span></td>
<td>96</td>
<td>光明雲庐(洞泾镇)<br>单价(元/㎡):40000.00<br>最低參考总价（万元）:337<br>最高參考总价（万元）:387</td>
<td><span class="thumb"><svg width="30" height="30" viewBox="0 0 30 30" style="display:block"><defs><filter id="tbr96" x="-10%" y="-10%" width="120%" height="120%"><feGaussianBlur stdDeviation="0.55"/></filter><clipPath id="tcr96"><rect width="30" height="30"/></clipPath></defs><g clip-path="url(#tcr96)"><g filter="url(#tbr96)"><rect x="-2" y="-2" width="34" height="34" fill="#b9d2f2"/><path d="M-2 -2h22v8h-22z" fill="#8cb8ee"/><path d="M-2 5h22v7h-22z" fill="#c4dbf6"/><path d="M8 8h11v4h-11z" fill="#eef4fb"/><path d="M20 -2h12v16h-14z" fill="#b6957c"/><path d="M20 -2h3v14h-5z" fill="#8d6f5c"/><path d="M-2 8l4 3l2 2h-6z" fill="#3f4652"/><path d="M-2 12h34v3h-34z" fill="#6b5a52"/><path d="M5 12h19v2.500h-19z" fill="#44342f"/><rect x="-2" y="15" width="34" height="8" fill="#9c8a78"/><rect x="8" y="14" width="2.5" height="9" fill="#4a3a34"/><rect x="18" y="14" width="2.5" height="9" fill="#4a3a34"/><rect x="10.5" y="16" width="7.5" height="6" fill="#a9a59a"/><rect x="12" y="17" width="4.5" height="3" fill="#c9cdbf"/><rect x="24" y="13" width="6" height="2" fill="#7f8f5c"/><rect x="0" y="13.5" width="6" height="2" fill="#8a8f66"/><rect x="-2" y="22.5" width="34" height="1" fill="#8a9a70"/><rect x="-2" y="23.5" width="34" height="5" fill="#4f566c"/><rect x="-2" y="26" width="34" height="2" fill="#66708c"/><rect x="-2" y="28.5" width="34" height="3" fill="#2e5a22"/></g></g></svg></span></td>
<td style="color:#444c69">在售</td>
<td>上海市 上海市 松江区<br>洞泾镇 新农河路近蔡家浜路</td>
<td><span class="lab">住宅</span></td>
<td>2020-10-08 11:59:21</td>
<td>997</td>
<td></td>
</tr>
<tr class="">
<td><span class="cb"></span></td>
<td>98</td>
<td>光明雲庐(洞泾镇)<br>单价(元/㎡):45000.00<br>最低參考总价（万元）:520<br>最高參考总价（万元）:660</td>
<td><span class="thumb"><svg width="30" height="30" viewBox="0 0 30 30" style="display:block"><defs><filter id="tbr98" x="-10%" y="-10%" width="120%" height="120%"><feGaussianBlur stdDeviation="0.55"/></filter><clipPath id="tcr98"><rect width="30" height="30"/></clipPath></defs><g clip-path="url(#tcr98)"><g filter="url(#tbr98)"><rect x="-2" y="-2" width="34" height="34" fill="#b9d2f2"/><path d="M-2 -2h22v8h-22z" fill="#8cb8ee"/><path d="M-2 5h22v7h-22z" fill="#c4dbf6"/><path d="M8 8h11v4h-11z" fill="#eef4fb"/><path d="M20 -2h12v16h-14z" fill="#b6957c"/><path d="M20 -2h3v14h-5z" fill="#8d6f5c"/><path d="M-2 8l4 3l2 2h-6z" fill="#3f4652"/><path d="M-2 12h34v3h-34z" fill="#6b5a52"/><path d="M5 12h19v2.500h-19z" fill="#44342f"/><rect x="-2" y="15" width="34" height="8" fill="#9c8a78"/><rect x="8" y="14" width="2.5" height="9" fill="#4a3a34"/><rect x="18" y="14" width="2.5" height="9" fill="#4a3a34"/><rect x="10.5" y="16" width="7.5" height="6" fill="#a9a59a"/><rect x="12" y="17" width="4.5" height="3" fill="#c9cdbf"/><rect x="24" y="13" width="6" height="2" fill="#7f8f5c"/><rect x="0" y="13.5" width="6" height="2" fill="#8a8f66"/><rect x="-2" y="22.5" width="34" height="1" fill="#8a9a70"/><rect x="-2" y="23.5" width="34" height="5" fill="#4f566c"/><rect x="-2" y="26" width="34" height="2" fill="#66708c"/><rect x="-2" y="28.5" width="34" height="3" fill="#2e5a22"/></g></g></svg></span></td>
<td style="color:#18bc9c">售罄</td>
<td>上海市 上海市 松江区<br>洞泾镇 新农河路近蔡家浜路</td>
<td><span class="lab">别墅</span></td>
<td>2020-10-08 13:00:38</td>
<td>996</td>
<td></td>
</tr>
<tr class="s">
<td><span class="cb"></span></td>
<td>104</td>
<td>映虹桥(赵巷镇)<br>单价(元/㎡):55000.00<br>最低參考总价（万元）:700<br>最高參考总价（万元）:890</td>
<td><span class="thumb"><svg width="30" height="30" viewBox="0 0 30 30" style="display:block"><defs><filter id="tbr104" x="-10%" y="-10%" width="120%" height="120%"><feGaussianBlur stdDeviation="0.55"/></filter><clipPath id="tcr104"><rect width="30" height="30"/></clipPath></defs><g clip-path="url(#tcr104)"><g filter="url(#tbr104)"><rect x="-2" y="-2" width="34" height="34" fill="#9cc4e8"/><path d="M9 -2h20v8h-20z" fill="#78ade0"/><path d="M10 8h18v8h-18z" fill="#c2dcf0"/><path d="M-2 -2h11l3 5v27h-14z" fill="#6d8db4"/><path d="M-2 -2h4v32h-4z" fill="#4f6f98"/><path d="M5 0l4 1l3 4h-7z" fill="#8a7a6a"/><rect x="2" y="5" width="9" height="1" fill="#a9bdd6"/><rect x="2" y="9" width="9" height="1" fill="#a9bdd6"/><rect x="2" y="13" width="9" height="1" fill="#b5c4d8"/><rect x="2" y="17" width="9" height="1.5" fill="#c0c8d0"/><rect x="3" y="21" width="8" height="1.5" fill="#c5c8cc"/><path d="M28 -2h4v34h-7l0 -16z" fill="#2f3a48"/><path d="M24 14l4 -8v24h-4z" fill="#56667a"/><path d="M15 10l3 0.500v8h-3z" fill="#e8edf2"/><path d="M18 10.500l2 1.500v7h-2z" fill="#8f9aa8"/><path d="M12 12h2.500v7h-2.500z" fill="#cfd8e2"/><path d="M11 15l3 0v8h-3z" fill="#3f5a38"/><path d="M20 15l5 -1v9h-5z" fill="#3f6a3a"/><path d="M-2 19l3 0v13h-3z" fill="#24301e"/><path d="M6 30l6 -7l3 -2l2 0l-4 9z" fill="#7a9a4a"/><path d="M15 23l7 -1l3 8h-10z" fill="#7aa648"/><path d="M12 30l4 -6l2 0l0 6z" fill="#c0566a"/><path d="M9 30l6 -8l1 0l-4 8z" fill="#d8d8d8"/><path d="M22 24l3 0l1 6h-3z" fill="#c85a6a"/><path d="M2 20h7v10h-7z" fill="#5a6a7a"/></g></g></svg></span></td>
<td style="color:#444c69">在售</td>
<td>上海市 上海市 青浦区<br>赵巷镇 青浦区赵巷镇业煌路</td>
<td><span class="lab">别墅</span></td>
<td>2020-10-08 13:33:51</td>
<td>995</td>
<td></td>
</tr>
<tr class="">
<td><span class="cb"></span></td>
<td>105</td>
<td>恒大文化旅游城(浏河镇)<br>单价(元/㎡):15000.00<br>最低參考总价（万元）:120<br>最高參考总价（万元）:300</td>
<td><span class="thumb"><svg width="30" height="30" viewBox="0 0 30 30" style="display:block"><defs><filter id="tbr105" x="-10%" y="-10%" width="120%" height="120%"><feGaussianBlur stdDeviation="0.60"/></filter><clipPath id="tcr105"><rect width="30" height="30"/></clipPath></defs><g clip-path="url(#tcr105)"><g filter="url(#tbr105)"><rect x="-2" y="-2" width="34" height="34" fill="#4a6fcf"/><rect x="-2" y="-2" width="18" height="6" fill="#3f68d0"/><rect x="17" y="-2" width="15" height="8" fill="#8a8a90"/><path d="M4 3l6 0l1 4h-7z" fill="#c05a78"/><path d="M18 2l3 -2l1 6h-4z" fill="#c8607a"/><rect x="23" y="3" width="7" height="6" fill="#7a6a4a"/><rect x="-2" y="6" width="34" height="12" fill="#7a6aa0"/><rect x="-2" y="18" width="34" height="14" fill="#3a4a6a"/></g></g></svg></span></td>
<td style="color:#444c69">在售</td>
<td>江苏省 苏州市 太仓市<br>浏河镇 太仓市浏河镇</td>
<td><span class="lab">住宅</span></td>
<td>2020-10-08 13:40:11</td>
<td>994</td>
<td></td>
</tr>
</tbody></table></div>
<div id="fix"><div class="h">操作</div>
<div class="r s" style="border-top:0;height:96px"><span class="xs" style="left:16px;width:70px;background:#1688f1"><svg class="fa" width="6.000" height="12.000" viewBox="0 -1536 896 1792" style="vertical-align:-2px"><path fill="#fff" transform="scale(1,-1)" d="M885 970q18 -20 7 -44l-540 -1157q-13 -25 -42 -25q-4 0 -14 2q-17 5 -25.5 19t-4.5 30l197 808l-406 -101q-4 -1 -12 -1q-18 0 -31 11q-18 15 -13 39l201 825q4 14 16 23t28 9h328q19 0 32 -12.5t13 -29.5q0 -8 -5 -18l-171 -463l396 98q8 2 12 2q19 0 34 -15z"/></svg> 动态管理</span><span class="xs" style="left:90px;width:22px;background:#18bc9c"><svg class="fa" width="10.286" height="12.000" viewBox="0 -1536 1536 1792" style="vertical-align:-2px"><path fill="#fff" transform="scale(1,-1)" d="M363 0l91 91l-235 235l-91 -91v-107h128v-128h107zM886 928q0 22 -22 22q-10 0 -17 -7l-542 -542q-7 -7 -7 -17q0 -22 22 -22q10 0 17 7l542 542q7 7 7 17zM832 1120l416 -416l-832 -832h-416v416zM1515 1024q0 -53 -37 -90l-166 -166l-416 416l166 165q36 38 90 38
q53 0 91 -38l235 -234q37 -39 37 -91z"/></svg></span></div>
<div class="r hv"><span class="xs" style="left:16px;width:70px;background:#1688f1"><svg class="fa" width="6.000" height="12.000" viewBox="0 -1536 896 1792" style="vertical-align:-2px"><path fill="#fff" transform="scale(1,-1)" d="M885 970q18 -20 7 -44l-540 -1157q-13 -25 -42 -25q-4 0 -14 2q-17 5 -25.5 19t-4.5 30l197 808l-406 -101q-4 -1 -12 -1q-18 0 -31 11q-18 15 -13 39l201 825q4 14 16 23t28 9h328q19 0 32 -12.5t13 -29.5q0 -8 -5 -18l-171 -463l396 98q8 2 12 2q19 0 34 -15z"/></svg> 动态管理</span><span class="xs" style="left:90px;width:22px;background:#18bc9c"><svg class="fa" width="10.286" height="12.000" viewBox="0 -1536 1536 1792" style="vertical-align:-2px"><path fill="#fff" transform="scale(1,-1)" d="M363 0l91 91l-235 235l-91 -91v-107h128v-128h107zM886 928q0 22 -22 22q-10 0 -17 -7l-542 -542q-7 -7 -7 -17q0 -22 22 -22q10 0 17 7l542 542q7 7 7 17zM832 1120l416 -416l-832 -832h-416v416zM1515 1024q0 -53 -37 -90l-166 -166l-416 416l166 165q36 38 90 38
q53 0 91 -38l235 -234q37 -39 37 -91z"/></svg></span></div>
<div class="r s"><span class="xs" style="left:16px;width:70px;background:#1688f1"><svg class="fa" width="6.000" height="12.000" viewBox="0 -1536 896 1792" style="vertical-align:-2px"><path fill="#fff" transform="scale(1,-1)" d="M885 970q18 -20 7 -44l-540 -1157q-13 -25 -42 -25q-4 0 -14 2q-17 5 -25.5 19t-4.5 30l197 808l-406 -101q-4 -1 -12 -1q-18 0 -31 11q-18 15 -13 39l201 825q4 14 16 23t28 9h328q19 0 32 -12.5t13 -29.5q0 -8 -5 -18l-171 -463l396 98q8 2 12 2q19 0 34 -15z"/></svg> 动态管理</span><span class="xs" style="left:90px;width:22px;background:#18bc9c"><svg class="fa" width="10.286" height="12.000" viewBox="0 -1536 1536 1792" style="vertical-align:-2px"><path fill="#fff" transform="scale(1,-1)" d="M363 0l91 91l-235 235l-91 -91v-107h128v-128h107zM886 928q0 22 -22 22q-10 0 -17 -7l-542 -542q-7 -7 -7 -17q0 -22 22 -22q10 0 17 7l542 542q7 7 7 17zM832 1120l416 -416l-832 -832h-416v416zM1515 1024q0 -53 -37 -90l-166 -166l-416 416l166 165q36 38 90 38
q53 0 91 -38l235 -234q37 -39 37 -91z"/></svg></span></div>
<div class="r "><span class="xs" style="left:16px;width:70px;background:#1688f1"><svg class="fa" width="6.000" height="12.000" viewBox="0 -1536 896 1792" style="vertical-align:-2px"><path fill="#fff" transform="scale(1,-1)" d="M885 970q18 -20 7 -44l-540 -1157q-13 -25 -42 -25q-4 0 -14 2q-17 5 -25.5 19t-4.5 30l197 808l-406 -101q-4 -1 -12 -1q-18 0 -31 11q-18 15 -13 39l201 825q4 14 16 23t28 9h328q19 0 32 -12.5t13 -29.5q0 -8 -5 -18l-171 -463l396 98q8 2 12 2q19 0 34 -15z"/></svg> 动态管理</span><span class="xs" style="left:90px;width:22px;background:#18bc9c"><svg class="fa" width="10.286" height="12.000" viewBox="0 -1536 1536 1792" style="vertical-align:-2px"><path fill="#fff" transform="scale(1,-1)" d="M363 0l91 91l-235 235l-91 -91v-107h128v-128h107zM886 928q0 22 -22 22q-10 0 -17 -7l-542 -542q-7 -7 -7 -17q0 -22 22 -22q10 0 17 7l542 542q7 7 7 17zM832 1120l416 -416l-832 -832h-416v416zM1515 1024q0 -53 -37 -90l-166 -166l-416 416l166 165q36 38 90 38
q53 0 91 -38l235 -234q37 -39 37 -91z"/></svg></span></div>
<div class="r s"><span class="xs" style="left:16px;width:70px;background:#1688f1"><svg class="fa" width="6.000" height="12.000" viewBox="0 -1536 896 1792" style="vertical-align:-2px"><path fill="#fff" transform="scale(1,-1)" d="M885 970q18 -20 7 -44l-540 -1157q-13 -25 -42 -25q-4 0 -14 2q-17 5 -25.5 19t-4.5 30l197 808l-406 -101q-4 -1 -12 -1q-18 0 -31 11q-18 15 -13 39l201 825q4 14 16 23t28 9h328q19 0 32 -12.5t13 -29.5q0 -8 -5 -18l-171 -463l396 98q8 2 12 2q19 0 34 -15z"/></svg> 动态管理</span><span class="xs" style="left:90px;width:22px;background:#18bc9c"><svg class="fa" width="10.286" height="12.000" viewBox="0 -1536 1536 1792" style="vertical-align:-2px"><path fill="#fff" transform="scale(1,-1)" d="M363 0l91 91l-235 235l-91 -91v-107h128v-128h107zM886 928q0 22 -22 22q-10 0 -17 -7l-542 -542q-7 -7 -7 -17q0 -22 22 -22q10 0 17 7l542 542q7 7 7 17zM832 1120l416 -416l-832 -832h-416v416zM1515 1024q0 -53 -37 -90l-166 -166l-416 416l166 165q36 38 90 38
q53 0 91 -38l235 -234q37 -39 37 -91z"/></svg></span></div>
<div class="r "><span class="xs" style="left:16px;width:70px;background:#1688f1"><svg class="fa" width="6.000" height="12.000" viewBox="0 -1536 896 1792" style="vertical-align:-2px"><path fill="#fff" transform="scale(1,-1)" d="M885 970q18 -20 7 -44l-540 -1157q-13 -25 -42 -25q-4 0 -14 2q-17 5 -25.5 19t-4.5 30l197 808l-406 -101q-4 -1 -12 -1q-18 0 -31 11q-18 15 -13 39l201 825q4 14 16 23t28 9h328q19 0 32 -12.5t13 -29.5q0 -8 -5 -18l-171 -463l396 98q8 2 12 2q19 0 34 -15z"/></svg> 动态管理</span><span class="xs" style="left:90px;width:22px;background:#18bc9c"><svg class="fa" width="10.286" height="12.000" viewBox="0 -1536 1536 1792" style="vertical-align:-2px"><path fill="#fff" transform="scale(1,-1)" d="M363 0l91 91l-235 235l-91 -91v-107h128v-128h107zM886 928q0 22 -22 22q-10 0 -17 -7l-542 -542q-7 -7 -7 -17q0 -22 22 -22q10 0 17 7l542 542q7 7 7 17zM832 1120l416 -416l-832 -832h-416v416zM1515 1024q0 -53 -37 -90l-166 -166l-416 416l166 165q36 38 90 38
q53 0 91 -38l235 -234q37 -39 37 -91z"/></svg></span></div>
</div>
<div class="abs" style="left:1577px;top:50px;width:17px;height:706px;background:#f1f1f1"></div><div class="abs" style="left:1579px;top:67px;width:13px;height:378px;background:#c1c1c1"></div><svg class="abs" style="left:1582px;top:57px" width="7" height="4" viewBox="0 0 7 4"><path d="M0 4h7L3.500 0z" fill="#a3a3a3"/></svg><svg class="abs" style="left:1582px;top:745px" width="7" height="4" viewBox="0 0 7 4"><path d="M0 0h7L3.500 4z" fill="#505050"/></svg>
<div id="hdr">
<div class="t" style="left:16px;color:#333"><svg class="fa" width="12.429" height="14.500" viewBox="0 -1536 1536 1792" style="position:relative;top:.5px"><path fill="#444" transform="scale(1,-1)" d="M1536 192v-128q0 -26 -19 -45t-45 -19h-1408q-26 0 -45 19t-19 45v128q0 26 19 45t45 19h1408q26 0 45 -19t19 -45zM1536 704v-128q0 -26 -19 -45t-45 -19h-1408q-26 0 -45 19t-19 45v128q0 26 19 45t45 19h1408q26 0 45 -19t19 -45zM1536 1216v-128q0 -26 -19 -45
t-45 -19h-1408q-26 0 -45 19t-19 45v128q0 26 19 45t45 19h1408q26 0 45 -19t19 -45z"/></svg></div>
<div class="t" style="left:62px;color:#555"><svg class="fa" width="14.000" height="14.000" viewBox="0 -1536 1792 1792" style=""><path fill="#555" transform="scale(1,-1)" d="M384 384q0 53 -37.5 90.5t-90.5 37.5t-90.5 -37.5t-37.5 -90.5t37.5 -90.5t90.5 -37.5t90.5 37.5t37.5 90.5zM576 832q0 53 -37.5 90.5t-90.5 37.5t-90.5 -37.5t-37.5 -90.5t37.5 -90.5t90.5 -37.5t90.5 37.5t37.5 90.5zM1004 351l101 382q6 26 -7.5 48.5t-38.5 29.5
t-48 -6.5t-30 -39.5l-101 -382q-60 -5 -107 -43.5t-63 -98.5q-20 -77 20 -146t117 -89t146 20t89 117q16 60 -6 117t-72 91zM1664 384q0 53 -37.5 90.5t-90.5 37.5t-90.5 -37.5t-37.5 -90.5t37.5 -90.5t90.5 -37.5t90.5 37.5t37.5 90.5zM1024 1024q0 53 -37.5 90.5
t-90.5 37.5t-90.5 -37.5t-37.5 -90.5t37.5 -90.5t90.5 -37.5t90.5 37.5t37.5 90.5zM1472 832q0 53 -37.5 90.5t-90.5 37.5t-90.5 -37.5t-37.5 -90.5t37.5 -90.5t90.5 -37.5t90.5 37.5t37.5 90.5zM1792 384q0 -261 -141 -483q-19 -29 -54 -29h-1402q-35 0 -54 29
q-141 221 -141 483q0 182 71 348t191 286t286 191t348 71t348 -71t286 -191t191 -286t71 -348z"/></svg><span style="margin-left:6px">控制台</span></div>
<div class="abs" style="left:140px;top:0;width:109px;height:50px;background:#f9f9f9"></div>
<div class="t" style="left:158px;color:#222"><svg class="fa" width="11.000" height="14.000" viewBox="0 -1536 1408 1792" style=""><path fill="#333" transform="scale(1,-1)" d="M384 224v-64q0 -13 -9.5 -22.5t-22.5 -9.5h-64q-13 0 -22.5 9.5t-9.5 22.5v64q0 13 9.5 22.5t22.5 9.5h64q13 0 22.5 -9.5t9.5 -22.5zM384 480v-64q0 -13 -9.5 -22.5t-22.5 -9.5h-64q-13 0 -22.5 9.5t-9.5 22.5v64q0 13 9.5 22.5t22.5 9.5h64q13 0 22.5 -9.5t9.5 -22.5z
M640 480v-64q0 -13 -9.5 -22.5t-22.5 -9.5h-64q-13 0 -22.5 9.5t-9.5 22.5v64q0 13 9.5 22.5t22.5 9.5h64q13 0 22.5 -9.5t9.5 -22.5zM384 736v-64q0 -13 -9.5 -22.5t-22.5 -9.5h-64q-13 0 -22.5 9.5t-9.5 22.5v64q0 13 9.5 22.5t22.5 9.5h64q13 0 22.5 -9.5t9.5 -22.5z
M1152 224v-64q0 -13 -9.5 -22.5t-22.5 -9.5h-64q-13 0 -22.5 9.5t-9.5 22.5v64q0 13 9.5 22.5t22.5 9.5h64q13 0 22.5 -9.5t9.5 -22.5zM896 480v-64q0 -13 -9.5 -22.5t-22.5 -9.5h-64q-13 0 -22.5 9.5t-9.5 22.5v64q0 13 9.5 22.5t22.5 9.5h64q13 0 22.5 -9.5t9.5 -22.5z
M640 736v-64q0 -13 -9.5 -22.5t-22.5 -9.5h-64q-13 0 -22.5 9.5t-9.5 22.5v64q0 13 9.5 22.5t22.5 9.5h64q13 0 22.5 -9.5t9.5 -22.5zM384 992v-64q0 -13 -9.5 -22.5t-22.5 -9.5h-64q-13 0 -22.5 9.5t-9.5 22.5v64q0 13 9.5 22.5t22.5 9.5h64q13 0 22.5 -9.5t9.5 -22.5z
M1152 480v-64q0 -13 -9.5 -22.5t-22.5 -9.5h-64q-13 0 -22.5 9.5t-9.5 22.5v64q0 13 9.5 22.5t22.5 9.5h64q13 0 22.5 -9.5t9.5 -22.5zM896 736v-64q0 -13 -9.5 -22.5t-22.5 -9.5h-64q-13 0 -22.5 9.5t-9.5 22.5v64q0 13 9.5 22.5t22.5 9.5h64q13 0 22.5 -9.5t9.5 -22.5z
M640 992v-64q0 -13 -9.5 -22.5t-22.5 -9.5h-64q-13 0 -22.5 9.5t-9.5 22.5v64q0 13 9.5 22.5t22.5 9.5h64q13 0 22.5 -9.5t9.5 -22.5zM384 1248v-64q0 -13 -9.5 -22.5t-22.5 -9.5h-64q-13 0 -22.5 9.5t-9.5 22.5v64q0 13 9.5 22.5t22.5 9.5h64q13 0 22.5 -9.5t9.5 -22.5z
M1152 736v-64q0 -13 -9.5 -22.5t-22.5 -9.5h-64q-13 0 -22.5 9.5t-9.5 22.5v64q0 13 9.5 22.5t22.5 9.5h64q13 0 22.5 -9.5t9.5 -22.5zM896 992v-64q0 -13 -9.5 -22.5t-22.5 -9.5h-64q-13 0 -22.5 9.5t-9.5 22.5v64q0 13 9.5 22.5t22.5 9.5h64q13 0 22.5 -9.5t9.5 -22.5z
M640 1248v-64q0 -13 -9.5 -22.5t-22.5 -9.5h-64q-13 0 -22.5 9.5t-9.5 22.5v64q0 13 9.5 22.5t22.5 9.5h64q13 0 22.5 -9.5t9.5 -22.5zM1152 992v-64q0 -13 -9.5 -22.5t-22.5 -9.5h-64q-13 0 -22.5 9.5t-9.5 22.5v64q0 13 9.5 22.5t22.5 9.5h64q13 0 22.5 -9.5t9.5 -22.5z
M896 1248v-64q0 -13 -9.5 -22.5t-22.5 -9.5h-64q-13 0 -22.5 9.5t-9.5 22.5v64q0 13 9.5 22.5t22.5 9.5h64q13 0 22.5 -9.5t9.5 -22.5zM1152 1248v-64q0 -13 -9.5 -22.5t-22.5 -9.5h-64q-13 0 -22.5 9.5t-9.5 22.5v64q0 13 9.5 22.5t22.5 9.5h64q13 0 22.5 -9.5t9.5 -22.5z
M896 -128h384v1536h-1152v-1536h384v224q0 13 9.5 22.5t22.5 9.5h320q13 0 22.5 -9.5t9.5 -22.5v-224zM1408 1472v-1664q0 -26 -19 -45t-45 -19h-1280q-26 0 -45 19t-19 45v1664q0 26 19 45t45 19h1280q26 0 45 -19t19 -45z"/></svg><span style="margin-left:7px">楼盘管理</span></div>
<div class="t" style="left:925px"><svg class="fa" width="13.000" height="14.000" viewBox="0 -1536 1664 1792" style=""><path fill="#555" transform="scale(1,-1)" d="M1408 544v-480q0 -26 -19 -45t-45 -19h-384v384h-256v-384h-384q-26 0 -45 19t-19 45v480q0 1 0.5 3t0.5 3l575 474l575 -474q1 -2 1 -6zM1631 613l-62 -74q-8 -9 -21 -11h-3q-13 0 -21 7l-692 577l-692 -577q-12 -8 -24 -7q-13 2 -21 11l-62 74q-8 10 -7 23.5t11 21.5
l719 599q32 26 76 26t76 -26l244 -204v195q0 14 9 23t23 9h192q14 0 23 -9t9 -23v-408l219 -182q10 -8 11 -21.5t-7 -23.5z"/></svg><span style="margin-left:4px">主页</span></div>
<div class="t" style="left:1000px"><svg class="fa" width="11.000" height="14.000" viewBox="0 -1536 1408 1792" style=""><path fill="#555" transform="scale(1,-1)" d="M512 160v704q0 14 -9 23t-23 9h-64q-14 0 -23 -9t-9 -23v-704q0 -14 9 -23t23 -9h64q14 0 23 9t9 23zM768 160v704q0 14 -9 23t-23 9h-64q-14 0 -23 -9t-9 -23v-704q0 -14 9 -23t23 -9h64q14 0 23 9t9 23zM1024 160v704q0 14 -9 23t-23 9h-64q-14 0 -23 -9t-9 -23v-704
q0 -14 9 -23t23 -9h64q14 0 23 9t9 23zM480 1152h448l-48 117q-7 9 -17 11h-317q-10 -2 -17 -11zM1408 1120v-64q0 -14 -9 -23t-23 -9h-96v-948q0 -83 -47 -143.5t-113 -60.5h-832q-66 0 -113 58.5t-47 141.5v952h-96q-14 0 -23 9t-9 23v64q0 14 9 23t23 9h309l70 167
q15 37 54 63t79 26h320q40 0 79 -26t54 -63l70 -167h309q14 0 23 -9t9 -23z"/></svg><span style="margin-left:4px">清除缓存</span></div>
<div class="t" style="left:1101px"><svg class="fa" width="12.000" height="14.000" viewBox="0 -1536 1536 1792" style=""><path fill="#555" transform="scale(1,-1)" d="M654 458q-1 -3 -12.5 0.5t-31.5 11.5l-20 9q-44 20 -87 49q-7 5 -41 31.5t-38 28.5q-67 -103 -134 -181q-81 -95 -105 -110q-4 -2 -19.5 -4t-18.5 0q6 4 82 92q21 24 85.5 115t78.5 118q17 30 51 98.5t36 77.5q-8 1 -110 -33q-8 -2 -27.5 -7.5t-34.5 -9.5t-17 -5
q-2 -2 -2 -10.5t-1 -9.5q-5 -10 -31 -15q-23 -7 -47 0q-18 4 -28 21q-4 6 -5 23q6 2 24.5 5t29.5 6q58 16 105 32q100 35 102 35q10 2 43 19.5t44 21.5q9 3 21.5 8t14.5 5.5t6 -0.5q2 -12 -1 -33q0 -2 -12.5 -27t-26.5 -53.5t-17 -33.5q-25 -50 -77 -131l64 -28
q12 -6 74.5 -32t67.5 -28q4 -1 10.5 -25.5t4.5 -30.5zM449 944q3 -15 -4 -28q-12 -23 -50 -38q-30 -12 -60 -12q-26 3 -49 26q-14 15 -18 41l1 3q3 -3 19.5 -5t26.5 0t58 16q36 12 55 14q17 0 21 -17zM1147 815l63 -227l-139 42zM39 15l694 232v1032l-694 -233v-1031z
M1280 332l102 -31l-181 657l-100 31l-216 -536l102 -31l45 110l211 -65zM777 1294l573 -184v380zM1088 -29l158 -13l-54 -160l-40 66q-130 -83 -276 -108q-58 -12 -91 -12h-84q-79 0 -199.5 39t-183.5 85q-8 7 -8 16q0 8 5 13.5t13 5.5q4 0 18 -7.5t30.5 -16.5t20.5 -11
q73 -37 159.5 -61.5t157.5 -24.5q95 0 167 14.5t157 50.5q15 7 30.5 15.5t34 19t28.5 16.5zM1536 1050v-1079l-774 246q-14 -6 -375 -127.5t-368 -121.5q-13 0 -18 13q0 1 -1 3v1078q3 9 4 10q5 6 20 11q107 36 149 50v384l558 -198q2 0 160.5 55t316 108.5t161.5 53.5
q20 0 20 -21v-418z"/></svg></div>
<div class="t" style="left:1143px"><svg class="fa" width="12.000" height="14.000" viewBox="0 -1536 1536 1792" style=""><path fill="#555" transform="scale(1,-1)" d="M1283 995l-355 -355l355 -355l144 144q29 31 70 14q39 -17 39 -59v-448q0 -26 -19 -45t-45 -19h-448q-42 0 -59 40q-17 39 14 69l144 144l-355 355l-355 -355l144 -144q31 -30 14 -69q-17 -40 -59 -40h-448q-26 0 -45 19t-19 45v448q0 42 40 59q39 17 69 -14l144 -144
l355 355l-355 355l-144 -144q-19 -19 -45 -19q-12 0 -24 5q-40 17 -40 59v448q0 26 19 45t45 19h448q42 0 59 -40q17 -39 -14 -69l-144 -144l355 -355l355 355l-144 144q-31 30 -14 69q17 40 59 40h448q26 0 45 -19t19 -45v-448q0 -42 -39 -59q-13 -5 -25 -5q-26 0 -45 19z
"/></svg></div>
<svg class="abs" style="left:1185px;top:14px" width="25" height="25" viewBox="0 0 25 25"><g fill="none" stroke="#c9c9c9" stroke-width="1"><path d="M8.5 .6Q12.5 -.1 16.5 .6"/><path d="M8.5 24.4Q12.5 25.1 16.5 24.4"/><path d="M.6 8.5Q-.1 12.5 .6 16.5"/><path d="M24.4 8.5Q25.1 12.5 24.4 16.5"/></g><g transform="translate(2,2)"><path d="M.5 .5H11L15.5 5V15.5H.5z" fill="#c9daf6"/><path d="M2.5 4.6q.2-1.4 1.6-1.3q.6-1.3 2.1-.7q1.600 .2 1.500 2z" fill="#fff"/><path d="M1 15Q5 7.500 10 10.500L15 15z" fill="#41a832"/><path d="M.5 15.500V3L3 .5H11L15.500 5V15.500z" fill="none" stroke="#8c8c8c" stroke-width="1"/><path d="M11 .5V5H15.500" fill="#fff" stroke="#8c8c8c" stroke-width="1"/><path d="M7 16L16 8.200V11.500L11 16z" fill="#fff"/></g></svg>
<div class="t" style="left:1220px">西陆体验账号</div>
<div class="t" style="left:1334px"><svg class="fa" width="15.000" height="14.000" viewBox="0 -1536 1920 1792" style=""><path fill="#444" transform="scale(1,-1)" d="M896 640q0 106 -75 181t-181 75t-181 -75t-75 -181t75 -181t181 -75t181 75t75 181zM1664 128q0 52 -38 90t-90 38t-90 -38t-38 -90q0 -53 37.5 -90.5t90.5 -37.5t90.5 37.5t37.5 90.5zM1664 1152q0 52 -38 90t-90 38t-90 -38t-38 -90q0 -53 37.5 -90.5t90.5 -37.5
t90.5 37.5t37.5 90.5zM1280 731v-185q0 -10 -7 -19.5t-16 -10.5l-155 -24q-11 -35 -32 -76q34 -48 90 -115q7 -11 7 -20q0 -12 -7 -19q-23 -30 -82.5 -89.5t-78.5 -59.5q-11 0 -21 7l-115 90q-37 -19 -77 -31q-11 -108 -23 -155q-7 -24 -30 -24h-186q-11 0 -20 7.5t-10 17.5
l-23 153q-34 10 -75 31l-118 -89q-7 -7 -20 -7q-11 0 -21 8q-144 133 -144 160q0 9 7 19q10 14 41 53t47 61q-23 44 -35 82l-152 24q-10 1 -17 9.5t-7 19.5v185q0 10 7 19.5t16 10.5l155 24q11 35 32 76q-34 48 -90 115q-7 11 -7 20q0 12 7 20q22 30 82 89t79 59q11 0 21 -7
l115 -90q34 18 77 32q11 108 23 154q7 24 30 24h186q11 0 20 -7.5t10 -17.5l23 -153q34 -10 75 -31l118 89q8 7 20 7q11 0 21 -8q144 -133 144 -160q0 -8 -7 -19q-12 -16 -42 -54t-45 -60q23 -48 34 -82l152 -23q10 -2 17 -10.5t7 -19.5zM1920 198v-140q0 -16 -149 -31
q-12 -27 -30 -52q51 -113 51 -138q0 -4 -4 -7q-122 -71 -124 -71q-8 0 -46 47t-52 68q-20 -2 -30 -2t-30 2q-14 -21 -52 -68t-46 -47q-2 0 -124 71q-4 3 -4 7q0 25 51 138q-18 25 -30 52q-149 15 -149 31v140q0 16 149 31q13 29 30 52q-51 113 -51 138q0 4 4 7q4 2 35 20
t59 34t30 16q8 0 46 -46.5t52 -67.5q20 2 30 2t30 -2q51 71 92 112l6 2q4 0 124 -70q4 -3 4 -7q0 -25 -51 -138q17 -23 30 -52q149 -15 149 -31zM1920 1222v-140q0 -16 -149 -31q-12 -27 -30 -52q51 -113 51 -138q0 -4 -4 -7q-122 -71 -124 -71q-8 0 -46 47t-52 68
q-20 -2 -30 -2t-30 2q-14 -21 -52 -68t-46 -47q-2 0 -124 71q-4 3 -4 7q0 25 51 138q-18 25 -30 52q-149 15 -149 31v140q0 16 149 31q13 29 30 52q-51 113 -51 138q0 4 4 7q4 2 35 20t59 34t30 16q8 0 46 -46.5t52 -67.5q20 2 30 2t30 -2q51 71 92 112l6 2q4 0 124 -70
q4 -3 4 -7q0 -25 -51 -138q17 -23 30 -52q149 -15 149 -31z"/></svg></div>
</div>
</body></html>
